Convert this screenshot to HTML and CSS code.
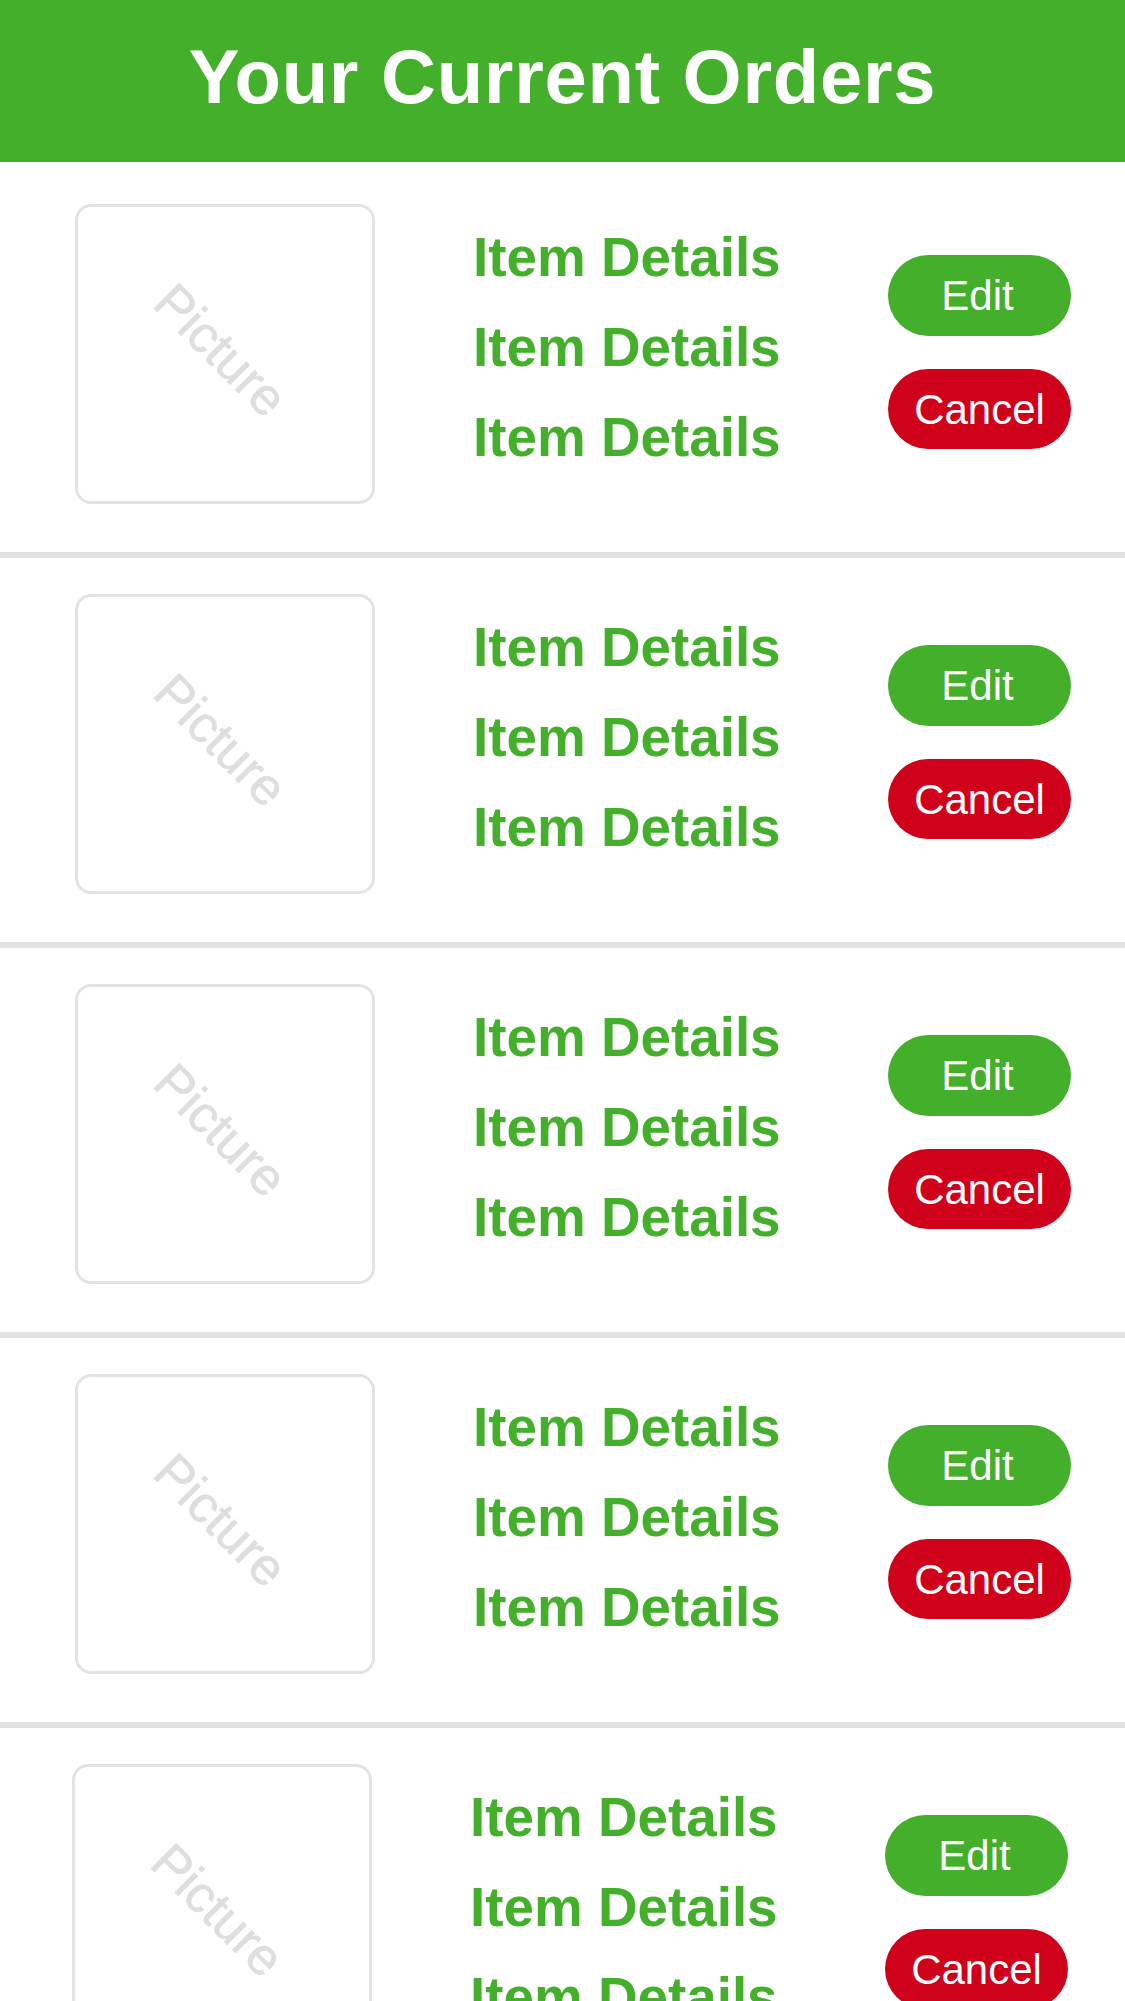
FILE: index.html
```html
<!DOCTYPE html>
<html lang="en">
<head>
<meta charset="utf-8">
<title>Your Current Orders</title>
<link rel="stylesheet" href="styles.css">
</head>
<body>
<header class="topbar">
  <h1 class="topbar-title">Your Current Orders</h1>
</header>
<main class="orders">
  <section class="order order--first">
    <div class="order-inner">
      <div class="picture"><span class="picture-label">Picture</span></div>
      <div class="details">
        <p class="detail">Item Details</p>
        <p class="detail">Item Details</p>
        <p class="detail">Item Details</p>
      </div>
      <div class="actions">
        <button class="btn btn-edit">Edit</button>
        <button class="btn btn-cancel">Cancel</button>
      </div>
    </div>
  </section>
  <section class="order">
    <div class="order-inner">
      <div class="picture"><span class="picture-label">Picture</span></div>
      <div class="details">
        <p class="detail">Item Details</p>
        <p class="detail">Item Details</p>
        <p class="detail">Item Details</p>
      </div>
      <div class="actions">
        <button class="btn btn-edit">Edit</button>
        <button class="btn btn-cancel">Cancel</button>
      </div>
    </div>
  </section>
  <section class="order">
    <div class="order-inner">
      <div class="picture"><span class="picture-label">Picture</span></div>
      <div class="details">
        <p class="detail">Item Details</p>
        <p class="detail">Item Details</p>
        <p class="detail">Item Details</p>
      </div>
      <div class="actions">
        <button class="btn btn-edit">Edit</button>
        <button class="btn btn-cancel">Cancel</button>
      </div>
    </div>
  </section>
  <section class="order">
    <div class="order-inner">
      <div class="picture"><span class="picture-label">Picture</span></div>
      <div class="details">
        <p class="detail">Item Details</p>
        <p class="detail">Item Details</p>
        <p class="detail">Item Details</p>
      </div>
      <div class="actions">
        <button class="btn btn-edit">Edit</button>
        <button class="btn btn-cancel">Cancel</button>
      </div>
    </div>
  </section>
  <section class="order order--last">
    <div class="order-inner">
      <div class="picture"><span class="picture-label">Picture</span></div>
      <div class="details">
        <p class="detail">Item Details</p>
        <p class="detail">Item Details</p>
        <p class="detail">Item Details</p>
      </div>
      <div class="actions">
        <button class="btn btn-edit">Edit</button>
        <button class="btn btn-cancel">Cancel</button>
      </div>
    </div>
  </section>
</main>
</body>
</html>
```
FILE: styles.css
```css
* { box-sizing: border-box; }

html, body {
  margin: 0;
  padding: 0;
  background: #ffffff;
  font-family: "Liberation Sans", Arial, sans-serif;
}

.topbar {
  height: 162px;
  background: #43af2b;
  display: flex;
  align-items: flex-start;
  justify-content: center;
}

.topbar-title {
  margin: 0;
  padding-top: 33px;
  color: #ffffff;
  font-size: 76px;
  font-weight: 700;
  line-height: 88px;
  letter-spacing: 0.75px;
}

.orders {
  display: flex;
  flex-direction: column;
}

.order {
  padding: 36px 0 48px;
  border-bottom: 6px solid #e1e1e3;
}

.order--first {
  padding-top: 42px;
}

.order-inner {
  display: flex;
  align-items: flex-start;
  padding-left: 75px;
  padding-right: 54px;
}

.order--last .order-inner {
  padding-left: 72px;
  padding-right: 57px;
}

.picture {
  width: 300px;
  height: 300px;
  flex: none;
  border: 3px solid #e3e3e3;
  border-radius: 16px;
  display: flex;
  align-items: center;
  justify-content: center;
  overflow: hidden;
}

.picture-label {
  display: block;
  transform: translate(-4px, -4px) rotate(45deg);
  color: #dedede;
  font-size: 52px;
  line-height: 1;
  font-weight: 400;
  -webkit-text-stroke: 0.6px #dedede;
}

.details {
  margin-left: 98px;
  margin-top: 8px;
  display: flex;
  flex-direction: column;
}

.detail {
  margin: 0;
  color: #43af2b;
  font-size: 54.8px;
  font-weight: 700;
  line-height: 90px;
  white-space: nowrap;
}

.actions {
  margin-left: auto;
  margin-top: 51px;
  display: flex;
  flex-direction: column;
  gap: 33px;
}

.btn {
  width: 183px;
  height: 81px;
  border: none;
  border-radius: 41px;
  padding: 0;
  color: #ffffff;
  font-family: "Liberation Sans", Arial, sans-serif;
  font-size: 42px;
  font-weight: 400;
  line-height: 81px;
  text-align: center;
  cursor: pointer;
}

.btn-edit { background: #43af2b; padding-right: 4px; }
.btn-cancel { background: #d0021b; height: 80px; }
```
